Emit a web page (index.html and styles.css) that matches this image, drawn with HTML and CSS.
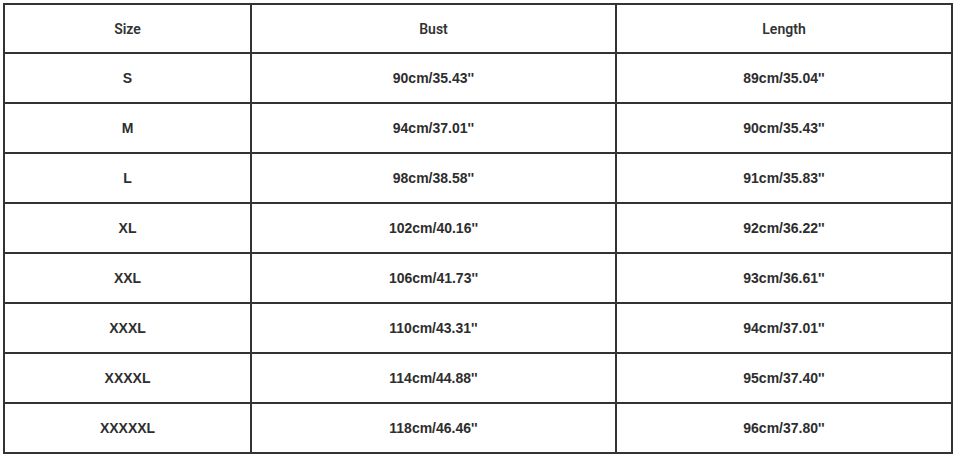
FILE: index.html
```html
<!DOCTYPE html>
<html>
<head>
<meta charset="utf-8">
<link rel="stylesheet" href="styles.css">
</head>
<body>
<table class="size-table">
  <colgroup>
    <col class="c1"><col class="c2"><col class="c3">
  </colgroup>
  <thead>
    <tr><th>Size</th><th>Bust</th><th>Length</th></tr>
  </thead>
  <tbody>
    <tr><td>S</td><td>90cm/35.43''</td><td>89cm/35.04''</td></tr>
    <tr><td>M</td><td>94cm/37.01''</td><td>90cm/35.43''</td></tr>
    <tr><td>L</td><td>98cm/38.58''</td><td>91cm/35.83''</td></tr>
    <tr><td>XL</td><td>102cm/40.16''</td><td>92cm/36.22''</td></tr>
    <tr><td>XXL</td><td>106cm/41.73''</td><td>93cm/36.61''</td></tr>
    <tr><td>XXXL</td><td>110cm/43.31''</td><td>94cm/37.01''</td></tr>
    <tr><td>XXXXL</td><td>114cm/44.88''</td><td>95cm/37.40''</td></tr>
    <tr><td>XXXXXL</td><td>118cm/46.46''</td><td>96cm/37.80''</td></tr>
  </tbody>
</table>
</body>
</html>
```
FILE: styles.css
```css
html, body {
  margin: 0;
  padding: 0;
  background: #ffffff;
}
body {
  padding: 3px 3px 0 3px;
}
.size-table {
  border-collapse: collapse;
  width: 948px;
  table-layout: fixed;
  font-family: "Liberation Sans", Arial, sans-serif;
  color: #2e2e2e;
}
.c1 { width: 247px; }
.c2 { width: 365px; }
.c3 { width: 336px; }
.size-table th,
.size-table td {
  border: 2px solid #333333;
  text-align: center;
  vertical-align: middle;
  padding: 0;
  height: 48px;
}
.size-table th {
  height: 47px;
  font-family: Roboto, "Liberation Sans", sans-serif;
  font-weight: 600;
  font-size: 14px;
  color: #333333;
}
.size-table td {
  font-weight: bold;
  font-size: 14px;
}
```
